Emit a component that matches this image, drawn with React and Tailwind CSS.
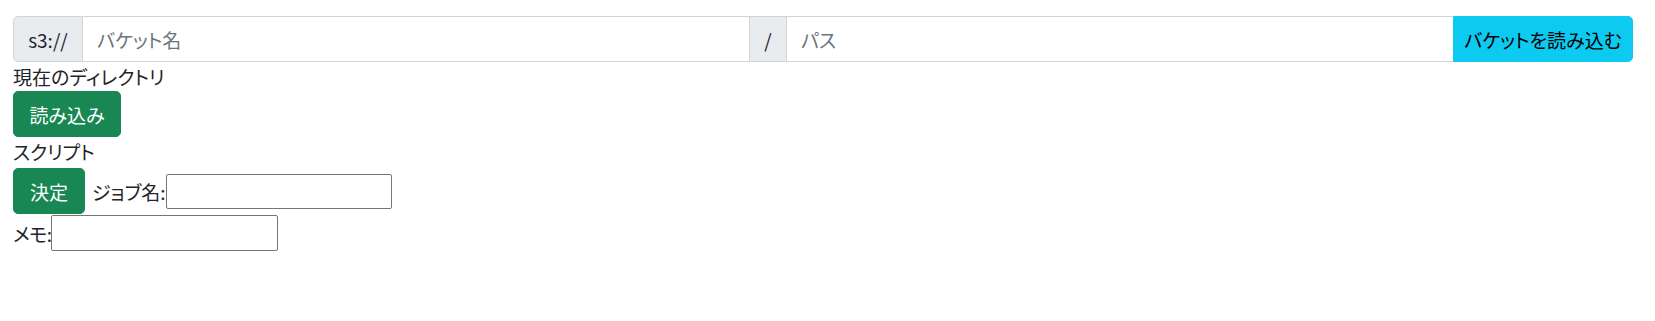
import React from "react";

export default function App() {
  return (
    <div className="h-[321px] w-[1655px] bg-white pt-[16px] pl-[13px] pr-[22px] font-['Noto_Sans_CJK_JP','Noto_Sans',sans-serif] text-[19px] leading-[29px] text-[#212529] [font-feature-settings:'palt']">
      <div className="flex h-[46px]">
        <span className="flex w-[70px] items-center justify-center rounded-l-[5px] border border-[#ced4da] bg-[#e9ecef]">
          s3://
        </span>
        <input
          placeholder="バケット名"
          className="min-w-0 flex-1 border-y border-[#ced4da] bg-white px-[14px] outline-none placeholder:text-[#6c757d]"
        />
        <span className="flex w-[38px] items-center justify-center border border-[#ced4da] bg-[#e9ecef]">
          /
        </span>
        <input
          placeholder="パス"
          className="min-w-0 flex-1 border-y border-[#ced4da] bg-white px-[14px] outline-none placeholder:text-[#6c757d]"
        />
        <button className="w-[180px] rounded-r-[5px] border border-[#0dcaf0] bg-[#0dcaf0] text-black">
          バケットを読み込む
        </button>
      </div>
      <div>現在のディレクトリ</div>
      <button className="block h-[46px] w-[108px] rounded-[5px] border border-[#198754] bg-[#198754] text-white">
        読み込み
      </button>
      <div>スクリプト</div>
      <div className="mt-[2px] flex items-baseline">
        <button className="h-[46px] w-[72px] rounded-[5px] border border-[#198754] bg-[#198754] text-white">
          決定
        </button>
        <span className="ml-[7px]">ジョブ名:</span>
        <input className="h-[35px] w-[226px] rounded-[2px] border border-[#767676] bg-white px-[2px] outline-none" />
      </div>
      <div className="mt-[1px] flex items-baseline">
        <span className="tracking-[-0.5px]">メモ:</span>
        <input className="h-[36px] w-[227px] rounded-[2px] border border-[#767676] bg-white px-[2px] outline-none" />
      </div>
    </div>
  );
}
